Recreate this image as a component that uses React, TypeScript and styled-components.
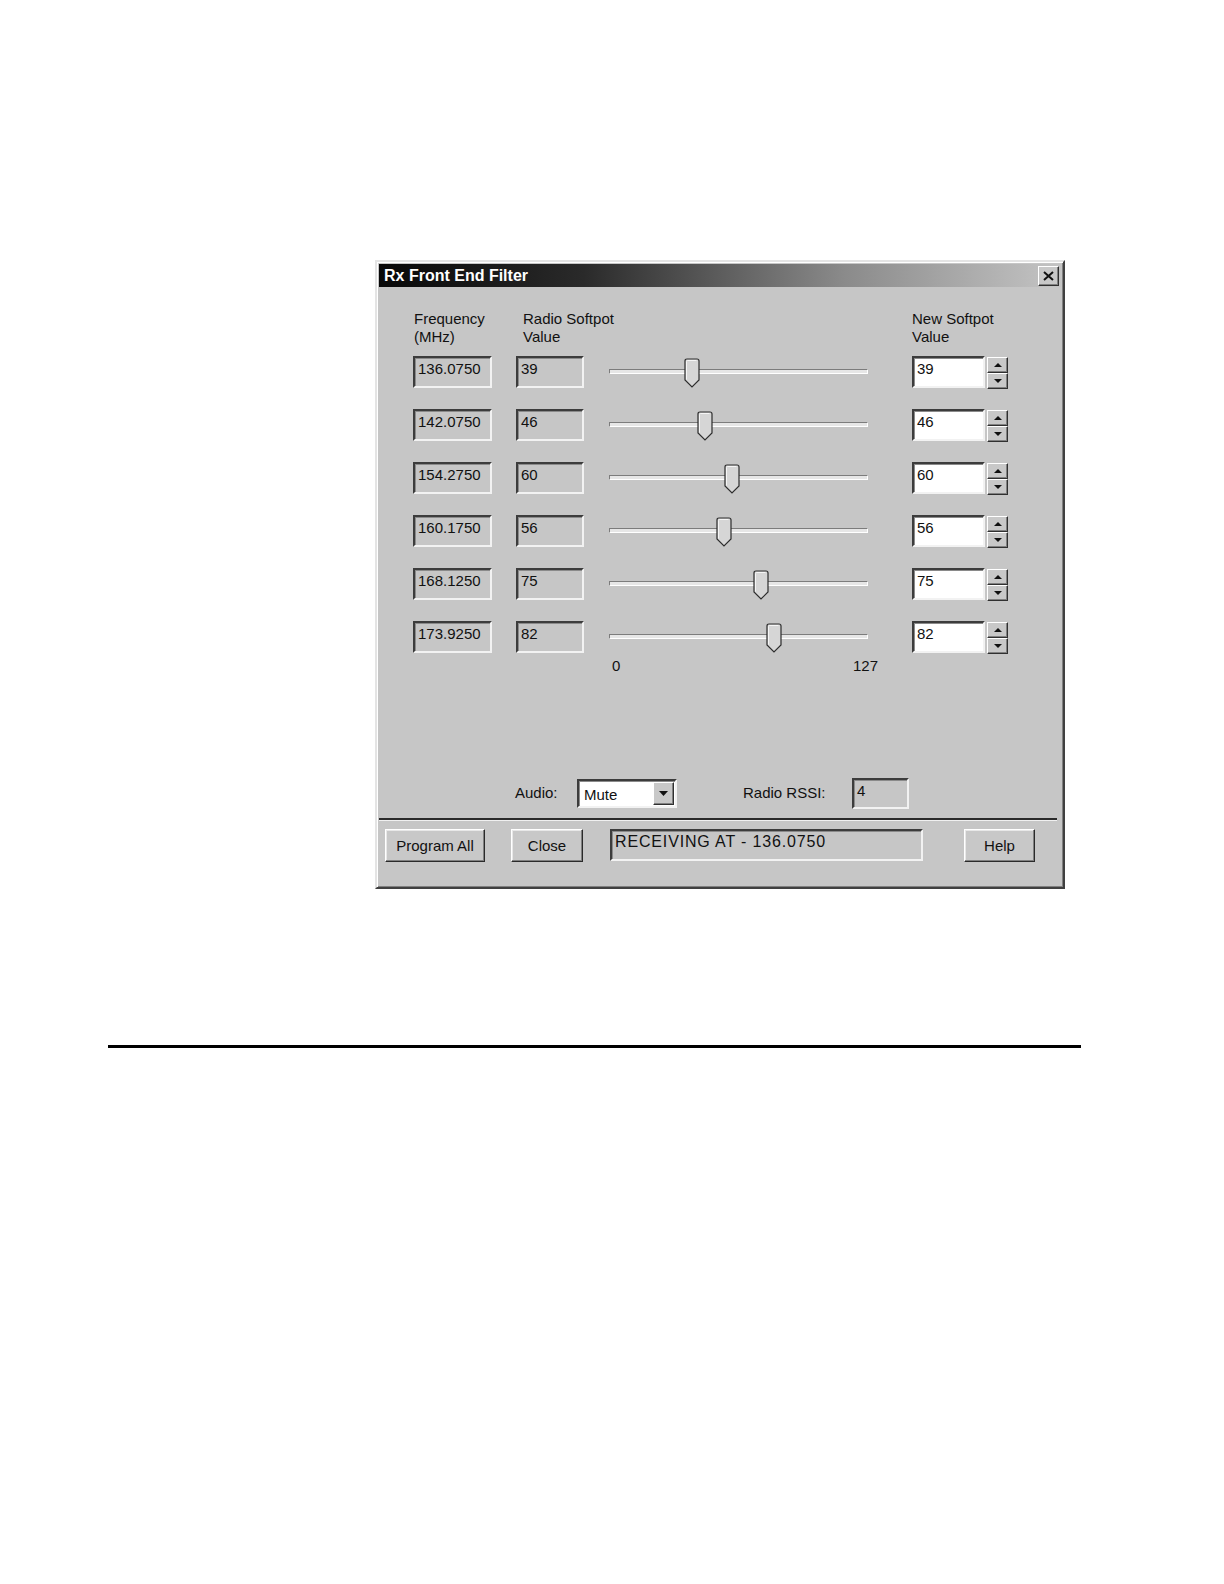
import React from 'react';
import styled, { createGlobalStyle } from 'styled-components';

// --- Global ---

const GlobalStyle = createGlobalStyle`
    html, body {
        margin: 0;
        padding: 0;
        background: #ffffff;
    }
    body {
        font-family: 'Liberation Sans', Arial, sans-serif;
        color: #111111;
    }
    * { box-sizing: border-box; }
`;

const Page = styled.div`
    width: 1224px;
    min-height: 1584px;
    padding-top: 260px;
`;

const Rule = styled.div`
    margin: 156px 0 0 108px;
    width: 973px;
    height: 3px;
    background: #000000;
`;

// --- Window chrome ---

const Window = styled.div`
    margin-left: 375px;
    width: 690px;
    height: 629px;
    background: #c6c6c6;
    border: 2px solid;
    border-color: #e4e4e4 #404040 #404040 #e4e4e4;
    box-shadow: inset 1px 1px 0 #ffffff, inset -1px -1px 0 #808080;
    padding: 2px;
    display: flex;
    flex-direction: column;
`;

const TitleBar = styled.div`
    height: 25px;
    display: flex;
    align-items: center;
    justify-content: space-between;
    padding: 0 2px 0 5px;
    background: linear-gradient(to right, #080808 0%, #2a2a2a 30%, #8a8a8a 68%, #c4c4c4 100%);
`;

const TitleText = styled.span`
    color: #ffffff;
    font-weight: 700;
    font-size: 16px;
`;

const CloseBox = styled.div`
    width: 21px;
    height: 20px;
    background: #c8c8c8;
    border: 1px solid;
    border-color: #ffffff #303030 #303030 #ffffff;
    box-shadow: inset -1px -1px 0 #808080;
    display: flex;
    align-items: center;
    justify-content: center;
`;

// --- Content ---

const Content = styled.div`
    flex: 1;
    display: flex;
    flex-direction: column;
    padding: 23px 0 0 34px;
`;

const Grid = styled.div`
    display: grid;
    grid-template-columns: 103px 93px 303px 96px;
    row-gap: 20px;
    align-items: start;
`;

const HeadCell = styled.div<{ indent?: number }>`
    font-size: 15px;
    line-height: 18px;
    padding-left: ${p => p.indent || 0}px;
    margin-bottom: -10px;
    white-space: nowrap;
`;

const Field = styled.div<{ w: number; white?: boolean }>`
    width: ${p => p.w}px;
    height: 32px;
    font-size: 15px;
    line-height: 18px;
    padding: 2px 0 0 3px;
    background: ${p => (p.white ? '#ffffff' : '#c6c6c6')};
    border: 2px solid;
    border-color: #3c3c3c #f2f2f2 #f2f2f2 #3c3c3c;
    box-shadow: inset 1px 1px 0 #8a8a8a;
    white-space: nowrap;
`;

const SpinWrap = styled.div`
    display: flex;
    gap: 2px;
    align-items: flex-start;
`;

const SpinCol = styled.div`
    display: flex;
    flex-direction: column;
    padding-top: 1px;
`;

const SpinBtn = styled.div`
    width: 21px;
    height: 16px;
    background: #c8c8c8;
    border: 1px solid;
    border-color: #ffffff #303030 #303030 #ffffff;
    box-shadow: inset -1px -1px 0 #808080;
    display: flex;
    align-items: center;
    justify-content: center;
`;

const Slider = styled.div`
    position: relative;
    width: 259px;
    height: 32px;
`;

const Track = styled.div`
    position: absolute;
    left: 0;
    right: 0;
    top: 13px;
    height: 5px;
    background: #e6e6e6;
    border-top: 1px solid #7c7c7c;
    border-left: 1px solid #7c7c7c;
    border-bottom: 1px solid #ffffff;
    border-right: 1px solid #ffffff;
`;

const Thumb = styled.svg`
    position: absolute;
    top: 2px;
`;

const ScaleRow = styled.div`
    display: flex;
    justify-content: space-between;
    width: 269px;
    padding-left: 3px;
    margin: 3px 0 0 196px;
    font-size: 15px;
    line-height: 18px;
`;

const AudioRow = styled.div`
    display: grid;
    grid-template-columns: 62px 166px 109px 57px;
    align-items: center;
    margin: 103px 0 0 102px;
    height: 31px;
    font-size: 15px;
`;

const Label = styled.span`
    font-size: 15px;
    padding-bottom: 3px;
`;

const Select = styled.div`
    width: 100px;
    height: 29px;
    background: #ffffff;
    border: 2px solid;
    border-color: #3c3c3c #f2f2f2 #f2f2f2 #3c3c3c;
    box-shadow: inset 1px 1px 0 #8a8a8a;
    display: flex;
    align-items: stretch;
    justify-content: space-between;
    padding: 1px;
`;

const SelectText = styled.span`
    padding: 4px 0 0 4px;
    font-size: 15px;
    line-height: 18px;
`;

const DropBtn = styled.div`
    width: 21px;
    background: #c8c8c8;
    border: 1px solid;
    border-color: #ffffff #303030 #303030 #ffffff;
    box-shadow: inset -1px -1px 0 #808080;
    display: flex;
    align-items: center;
    justify-content: center;
`;

const RssiBox = styled.div`
    width: 57px;
    height: 31px;
    padding: 2px 0 0 3px;
    font-size: 15px;
    line-height: 18px;
    border: 2px solid;
    border-color: #3c3c3c #f2f2f2 #f2f2f2 #3c3c3c;
    box-shadow: inset 1px 1px 0 #8a8a8a;
`;

const Separator = styled.div`
    margin: 9px 4px 0 0;
    height: 3px;
    border-top: 2px solid #2a2a2a;
    border-bottom: 1px solid #f0f0f0;
`;

const ButtonBar = styled.div`
    display: grid;
    grid-template-columns: 126px 99px 354px 71px;
    align-items: start;
    padding: 8px 0 0 6px;
    height: 68px;
`;

const Button = styled.div<{ w: number }>`
    width: ${p => p.w}px;
    height: 33px;
    background: #c8c8c8;
    border: 1px solid;
    border-color: #ffffff #2a2a2a #2a2a2a #ffffff;
    box-shadow: inset -1px -1px 0 #808080, inset 1px 1px 0 #e8e8e8;
    display: flex;
    align-items: center;
    justify-content: center;
    font-size: 15px;
`;

const Status = styled.div`
    width: 313px;
    height: 32px;
    padding: 2px 0 0 3px;
    font-size: 16px;
    letter-spacing: 0.85px;
    line-height: 18px;
    white-space: nowrap;
    border: 2px solid;
    border-color: #3c3c3c #f2f2f2 #f2f2f2 #3c3c3c;
    box-shadow: inset 1px 1px 0 #8a8a8a;
`;

// --- Data ---

const rows = [
    { freq: '136.0750', radio: 39 },
    { freq: '142.0750', radio: 46 },
    { freq: '154.2750', radio: 60 },
    { freq: '160.1750', radio: 56 },
    { freq: '168.1250', radio: 75 },
    { freq: '173.9250', radio: 82 },
];

const TRACK = 259;
const THUMB = 16;

const Arrow = ({ dir }: { dir: 'up' | 'down' }) => (
    <svg width="8" height="4" viewBox="0 0 8 4">
        {dir === 'up'
            ? <path d="M4 0 L8 4 H0 Z" fill="#111" />
            : <path d="M0 0 H8 L4 4 Z" fill="#111" />}
    </svg>
);

const ThumbShape = ({ left }: { left: number }) => (
    <Thumb width={THUMB} height="30" viewBox="0 0 16 30" style={{ left }}>
        <path d="M1 3 Q1 1 3 1 H13 Q15 1 15 3 V22 L8 29 L1 22 Z" fill="#d6d6d6" stroke="#2c2c2c" strokeWidth="1.2" />
        <path d="M2.5 21.5 V3.5 Q2.5 2.5 3.5 2.5 H12.5" fill="none" stroke="#f6f6f6" strokeWidth="1" />
    </Thumb>
);

const App: React.FC = () => {
    return (
        <Page>
            <GlobalStyle />
            <Window>
                <TitleBar>
                    <TitleText>Rx Front End Filter</TitleText>
                    <CloseBox>
                        <svg width="11" height="10" viewBox="0 0 11 10">
                            <path d="M1 1 L10 9 M10 1 L1 9" stroke="#111" strokeWidth="2" />
                        </svg>
                    </CloseBox>
                </TitleBar>

                <Content>
                    <Grid>
                        <HeadCell indent={1}>Frequency<br />(MHz)</HeadCell>
                        <HeadCell indent={7}>Radio Softpot<br />Value</HeadCell>
                        <div />
                        <HeadCell>New Softpot<br />Value</HeadCell>

                        {rows.map(r => (
                            <React.Fragment key={r.freq}>
                                <Field w={79}>{r.freq}</Field>
                                <Field w={68}>{r.radio}</Field>
                                <Slider>
                                    <Track />
                                    <ThumbShape left={Math.round((r.radio / 127) * (TRACK - THUMB))} />
                                </Slider>
                                <SpinWrap>
                                    <Field w={73} white>{r.radio}</Field>
                                    <SpinCol>
                                        <SpinBtn><Arrow dir="up" /></SpinBtn>
                                        <SpinBtn><Arrow dir="down" /></SpinBtn>
                                    </SpinCol>
                                </SpinWrap>
                            </React.Fragment>
                        ))}
                    </Grid>

                    <ScaleRow>
                        <span>0</span>
                        <span>127</span>
                    </ScaleRow>

                    <AudioRow>
                        <Label>Audio:</Label>
                        <Select>
                            <SelectText>Mute</SelectText>
                            <DropBtn>
                                <svg width="9" height="5" viewBox="0 0 9 5"><path d="M0 0 H9 L4.5 5 Z" fill="#111" /></svg>
                            </DropBtn>
                        </Select>
                        <Label>Radio RSSI:</Label>
                        <RssiBox>4</RssiBox>
                    </AudioRow>
                </Content>

                <Separator />

                <ButtonBar>
                    <Button w={100}>Program All</Button>
                    <Button w={72}>Close</Button>
                    <Status>RECEIVING AT - 136.0750</Status>
                    <Button w={71}>Help</Button>
                </ButtonBar>
            </Window>
            <Rule />
        </Page>
    );
};

export default App;
